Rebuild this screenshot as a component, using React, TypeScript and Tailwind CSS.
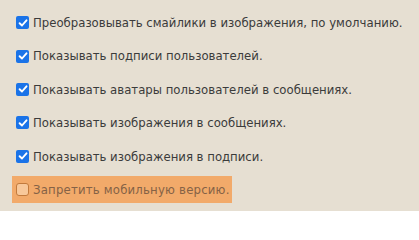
import React from "react";

const items = [
  { label: "Преобразовывать смайлики в изображения, по умолчанию.", checked: true },
  { label: "Показывать подписи пользователей.", checked: true },
  { label: "Показывать аватары пользователей в сообщениях.", checked: true },
  { label: "Показывать изображения в сообщениях.", checked: true },
  { label: "Показывать изображения в подписи.", checked: true },
];

function Box({ checked }: { checked: boolean }) {
  if (checked) {
    return (
      <span className="w-[13px] h-[13px] rounded-[2px] bg-[#1a73e8] flex items-center justify-center shrink-0">
        <svg width="10" height="10" viewBox="0 0 10 10">
          <path d="M1.6 5.2 L4 7.5 L8.5 2.3" stroke="white" strokeWidth="1.9" fill="none" strokeLinecap="round" strokeLinejoin="round" />
        </svg>
      </span>
    );
  }
  return <span className="w-[13px] h-[13px] rounded-[3px] border border-[#c27a3c] bg-[#f8c89a] shrink-0" />;
}

export default function App() {
  return (
    <div className="w-[419px] h-[211px] bg-[#e6dfd2] pt-[6px] text-[13px] text-[#3b3b3b] overflow-hidden" style={{ fontFamily: '"DejaVu Sans Condensed", "DejaVu Sans", Verdana, sans-serif' }}>
      {items.map((it, i) => (
        <div key={i} className="h-[33.4px] flex items-center pl-[16px] gap-[4px]">
          <Box checked={it.checked} />
          <span>{it.label}</span>
        </div>
      ))}
      <div className="h-[33.4px] flex items-center pl-[12px]">
        <div className="h-[27px] w-[220px] bg-[#f2aa6a] flex items-center pl-[4px] gap-[4px] text-[#856246]">
          <Box checked={false} />
          <span className="tracking-[0.2px]">Запретить мобильную версию.</span>
        </div>
      </div>
    </div>
  );
}
